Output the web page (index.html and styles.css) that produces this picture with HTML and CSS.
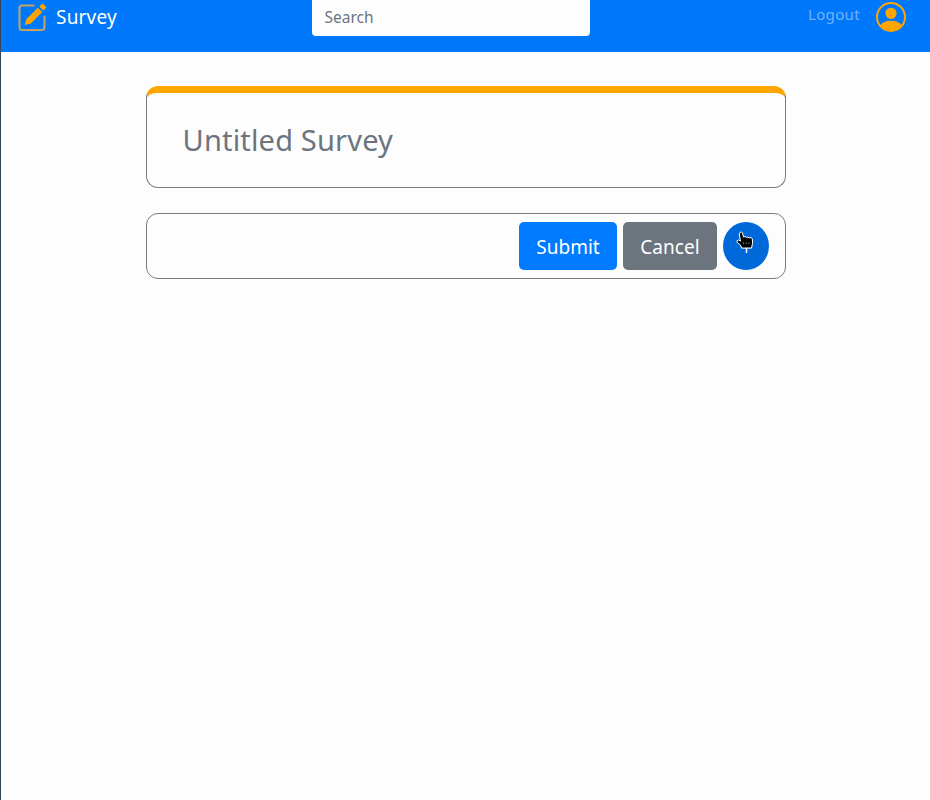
FILE: index.html
```html
<!DOCTYPE html>
<html lang="en">
<head>
<meta charset="utf-8">
<title>Survey</title>
<link rel="stylesheet" href="styles.css">
</head>
<body>
<header class="navbar">
  <a class="brand">
    <svg class="brand-icon" width="28" height="28" viewBox="0 0 28 28" fill="none">
      <path d="M16.500 2.500H4Q1.500 2.500 1.500 5V24.500Q1.500 27 4 27H24Q26.500 27 26.500 24.500V13" stroke="#c5a265" stroke-width="2"/>
      <path d="M6.800 22L8.500 16L19.800 4.700L24.200 9.100L12.900 20.400ZM21.300 3.500L23.400 1.400Q24.600 .3 25.800 1.400L27.500 3.100Q28.400 4.300 27.500 5.500L25.400 7.600Z" fill="#ffa500"/>
    </svg>
    <span class="brand-name">Survey</span>
  </a>
  <div class="search"><span class="search-text">Search</span></div>
  <nav class="account">
    <a class="logout">Logout</a>
    <svg class="avatar" width="30" height="30" viewBox="0 0 30 30">
      <circle cx="15" cy="15" r="14" fill="none" stroke="#ffa500" stroke-width="2"/>
      <circle cx="15" cy="11.300" r="5.600" fill="#ffa500"/>
      <path d="M4.500 23.500Q6.500 18.700 15 18.700T25.500 23.500Q21 29 15 29T4.500 23.500Z" fill="#ffa500"/>
    </svg>
  </nav>
</header>
<main class="content">
  <section class="card title-card"><h1 class="title">Untitled Survey</h1></section>
  <section class="card actions">
    <button class="btn submit"><span class="submit-text">Submit</span></button>
    <button class="btn cancel"><span class="cancel-text">Cancel</span></button>
    <button class="btn add" aria-label="Add">
      <svg width="46" height="48" viewBox="0 0 46 48">
        <path d="M18.500 25.500H28.500M23.500 20.500V31" stroke="#fff" stroke-width="1.500"/>
      </svg>
    </button>
    <svg class="pointer" width="18" height="18" viewBox="0 0 18 18">
      <path d="M4 1.500Q5.500 0 6.500 2L7.500 6L9 5.500L10.500 6.500L12 6L13.200 7L15 6.500Q16.500 7 16.500 9V12.500L15.500 17H5.500L4.500 14L1.200 11.500Q.2 9.300 2.500 9L4.500 10L3.200 3Z" fill="#000" stroke="#fff" stroke-width="1"/>
      <path d="M7.500 11.500v1.500M10.200 11.500v1.500M12.900 11.500v1.500" stroke="#bbb" stroke-width=".7"/>
    </svg>
  </section>
</main>
</body>
</html>
```
FILE: styles.css
```css
* { box-sizing: border-box; }
body {
  margin: 0;
  min-height: 800px;
  border-left: 1px solid #34465a;
  background: #fdfdfd;
  font-family: "Noto Sans", "Open Sans", sans-serif;
  overflow: hidden;
}
.navbar {
  height: 52px;
  display: grid;
  grid-template-columns: 311px 278px 1fr;
  align-items: start;
  background: #0078fb;
}
.brand { display: flex; padding: 3px 0 0 17px; gap: 10px; }
.brand-name { color: #fff; font-size: 19px; line-height: 29px; letter-spacing: .2px; }
.search {
  height: 36px;
  padding: 5px 12.500px;
  background: #fdfdfd;
  border-radius: 0 0 4px 4px;
  color: #6c757d;
  font-size: 15.500px;
  line-height: 24px;
}
.account {
  display: flex;
  justify-content: flex-end;
  gap: 16px;
  padding: 2px 24px 0 0;
}
.logout { color: #70b2f5; font-size: 15px; line-height: 24px; letter-spacing: .35px; }
.content {
  width: 640px;
  margin: 34px 0 0 145px;
  display: grid;
  gap: 25px;
}
.card { border: 1px solid #777b83; border-radius: 12px; }
.title-card {
  height: 102px;
  border-top: 7px solid #ffa500;
  padding: 27px 35.500px;
}
.title {
  margin: 0;
  color: #6c757d;
  font-size: 29px;
  line-height: 40px;
  font-weight: 400;
  letter-spacing: .18px;
}
.actions {
  position: relative;
  height: 66px;
  display: flex;
  justify-content: flex-end;
  align-items: center;
  gap: 6px;
  padding-right: 16px;
}
.btn {
  height: 48px;
  padding: 1px 0 0;
  border: 0;
  border-radius: 5px;
  color: #fff;
  font: 19px/30px "Noto Sans", "Open Sans", sans-serif;
}
.submit { width: 98px; background: #007bff; }
.cancel { width: 94px; background: #6c757d; letter-spacing: .1px; }
.add { width: 46px; padding: 0; border-radius: 50%; background: #0069d9; }
.add svg { display: block; }
.pointer { position: absolute; right: 31px; top: 17px; }
```
